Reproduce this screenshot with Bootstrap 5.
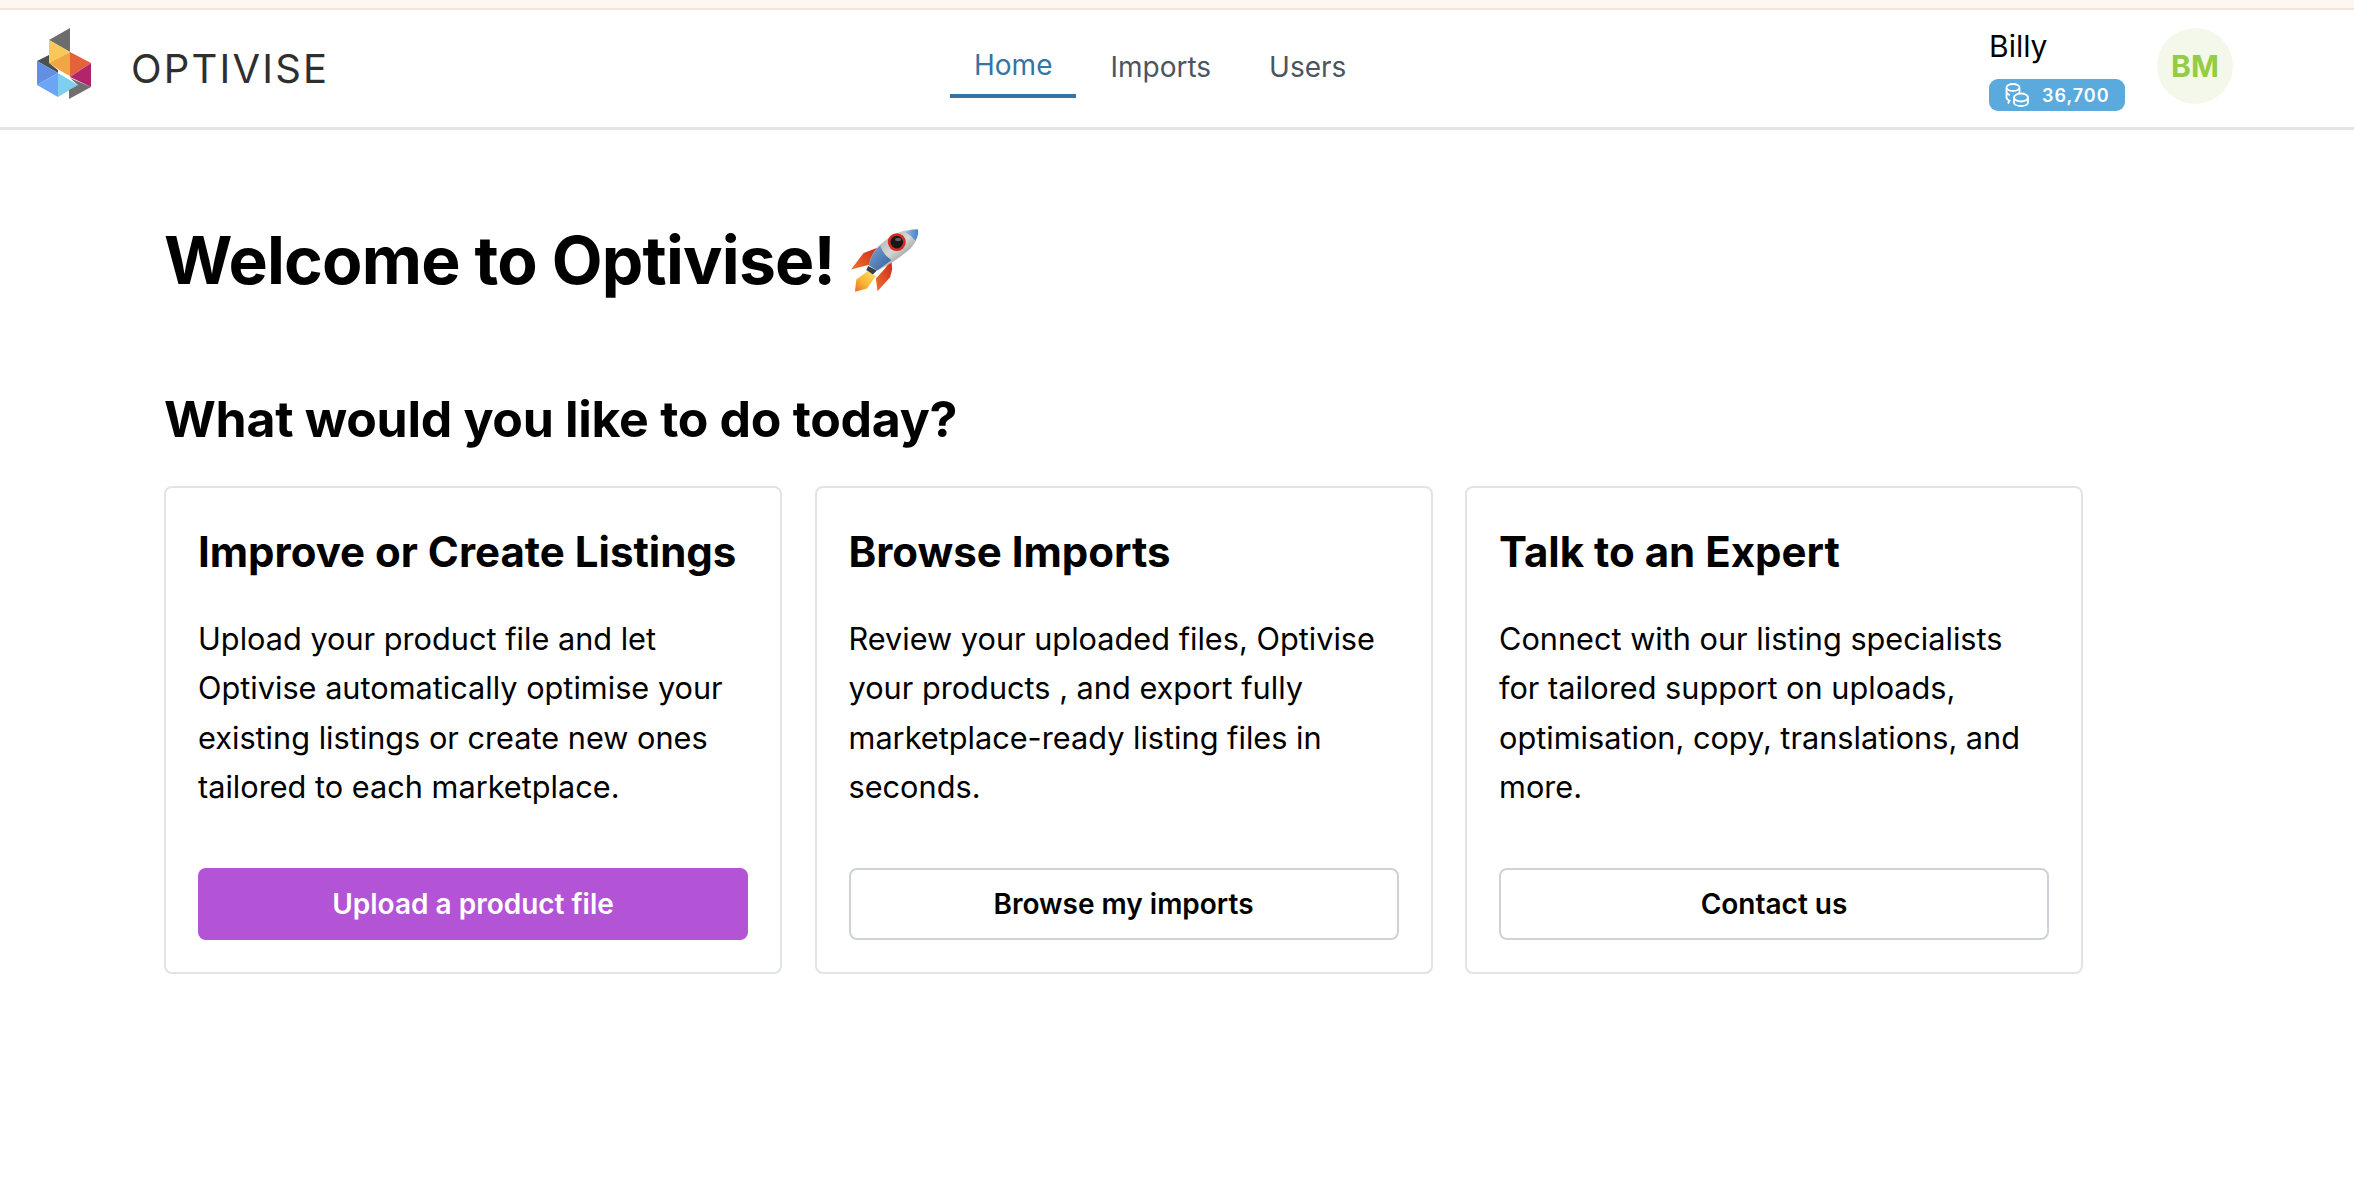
<!DOCTYPE html>
<html lang="en">
  <head>
    <meta charset="UTF-8" />
    <meta name="viewport" content="width=device-width, initial-scale=1.0" />
    <title>Optivise</title>
    <link href="https://cdn.jsdelivr.net/npm/bootstrap@5.3.3/dist/css/bootstrap.min.css" rel="stylesheet" />
    <style>
      body {
        font-family: Inter, "Liberation Sans", sans-serif;
        color: #000;
        background: #fff;
      }
      .top-strip {
        height: 10px;
        background: #fdf6f1;
        border-bottom: 2px solid #f6e4d9;
      }
      .app-bar {
        height: 120px;
        padding: 0 121px 0 37px;
        background: #fff;
        border-bottom: 3px solid #e1e5e9;
      }
      .logo-mark {
        margin-bottom: 9px;
      }
      .logo-word {
        font-size: 40px;
        font-weight: 400;
        letter-spacing: 2.2px;
        color: #2f2f2f;
        margin-left: 40px;
        line-height: 1;
      }
      .nav-holder {
        position: absolute;
        left: 950px;
        top: 28px;
      }
      .main-link {
        display: block;
        font-size: 28px;
        line-height: 1;
        color: #4b5560;
        text-decoration: none;
        padding: 15px 29px 0;
        height: 60px;
      }
      .main-link.current {
        color: #3574a4;
        border-bottom: 4px solid #3574a4;
        padding: 13px 24px 0;
        margin-right: 5px;
      }
      .user-block {
        margin-top: 5px;
        gap: 18px;
      }
      .user-name {
        font-size: 30px;
        line-height: 1;
        color: #000;
      }
      .credit-pill {
        background: #5aaade;
        color: #fff;
        border-radius: 9px;
        height: 32px;
        width: 136px;
        font-size: 18px;
        font-weight: 600;
        letter-spacing: 1px;
        gap: 13px;
        padding-left: 16px;
      }
      .avatar-dot {
        width: 76px;
        height: 76px;
        border-radius: 50%;
        background: #f3f8ea;
        color: #94cc45;
        font-size: 30px;
        font-weight: 700;
        margin-left: 32px;
        margin-bottom: 5px;
      }
      .page-body {
        padding-left: 164px;
      }
      .hello-title {
        font-size: 66px;
        font-weight: 700;
        line-height: 1;
        margin: 97px 0 0;
        letter-spacing: -0.8px;
      }
      .ask-title {
        font-size: 50px;
        font-weight: 700;
        line-height: 1;
        margin: 101px 0 0;
        letter-spacing: -0.3px;
      }
      .task-row {
        margin-top: 41.500px;
        gap: 32.5px;
      }
      .task-card {
        flex: 0 0 618px;
        height: 488px;
        border: 2px solid #e0e3e8;
        border-radius: 8px;
        padding: 32px;
      }
      .task-title {
        font-size: 42px;
        font-weight: 700;
        line-height: 64px;
        margin: 0;
      }
      .task-text {
        font-size: 30.7px;
        line-height: 49.6px;
        margin: 30px 0 0;
      }
      .task-btn {
        height: 72px;
        border-radius: 8px;
        font-size: 28px;
        font-weight: 600;
        padding: 0;
      }
      .btn-purple {
        background: #b354d7;
        color: #fff;
        border: 0;
      }
      .btn-plain {
        background: #fff;
        color: #000;
        border: 2px solid #cfd2d6;
      }
    </style>
  </head>
  <body>
    <div class="top-strip"></div>
    <nav class="app-bar d-flex align-items-center position-relative">
      <svg class="logo-mark" width="54" height="72" viewBox="0 0 54 72" aria-label="Optivise logo">
        <polygon points="12,12 33,0 33,24" fill="#6d6d6b" />
        <polygon points="12,12 33,24 12,35" fill="#f6c958" />
        <polygon points="33,24 12,35 33,49" fill="#f3a445" />
        <polygon points="33,24 54,35 33,49" fill="#e4623c" />
        <polygon points="54,35 54,59 33,49" fill="#b3246c" />
        <polygon points="0,33 12,27 12,35 21,42 21,45" fill="#4f4f4f" />
        <polygon points="0,33 21,45 0,57" fill="#628fe3" />
        <polygon points="21,45 0,57 21,69" fill="#6aa6f4" />
        <polygon points="21,45 21,69 41,57" fill="#7ecfec" />
        <polygon points="21,42 33,48 33,50 21,45" fill="#fff" />
        <polygon points="54,59 32,71 32,62 41,57 33,50" fill="#6f6f6f" />
      </svg>
      <span class="logo-word">OPTIVISE</span>
      <div class="nav-holder d-flex">
        <a class="main-link current" href="#">Home</a>
        <a class="main-link" href="#">Imports</a>
        <a class="main-link" href="#">Users</a>
      </div>
      <div class="ms-auto d-flex align-items-center">
        <div class="user-block d-flex flex-column">
          <span class="user-name">Billy</span>
          <span class="credit-pill d-flex align-items-center">
            <svg width="24" height="24" viewBox="0 0 24 24" fill="none" stroke="#fff" stroke-width="1.8">
              <ellipse cx="8" cy="4.5" rx="6.5" ry="3.5" />
              <path d="M1.500 4.500v4c0 2 1.500 3 3.500 3.500M1.500 9v5c0 2 1 3 3 3.500l-1.500 3M14.500 5v5" />
              <ellipse cx="16" cy="14.5" rx="7" ry="4" />
              <path d="M9 14.500v5c0 2 3 3.500 7 3.500s7-1.500 7-3.500v-5" />
            </svg>
            36,700
          </span>
        </div>
        <div class="avatar-dot d-flex align-items-center justify-content-center">BM</div>
      </div>
    </nav>

    <main class="page-body">
      <h1 class="hello-title d-flex align-items-center gap-3">
        Welcome to Optivise!
        <svg width="68" height="65" viewBox="30 80 205 195" aria-label="rocket">
          <defs>
            <linearGradient id="rocketBody" x1="0" y1="0" x2="1" y2="1">
              <stop offset="0" stop-color="#8e979c" />
              <stop offset="0.5" stop-color="#d6d8d6" />
              <stop offset="1" stop-color="#55585a" />
            </linearGradient>
            <linearGradient id="rocketTip" x1="0" y1="0" x2="1" y2="0">
              <stop offset="0" stop-color="#9fb8d6" />
              <stop offset="1" stop-color="#3f82cf" />
            </linearGradient>
            <linearGradient id="rocketBlue" x1="0" y1="0" x2="1" y2="1">
              <stop offset="0" stop-color="#7fa3cf" />
              <stop offset="1" stop-color="#2f5f9f" />
            </linearGradient>
            <linearGradient id="rocketFin" x1="1" y1="0" x2="0" y2="1">
              <stop offset="0" stop-color="#c9281c" />
              <stop offset="1" stop-color="#f0742e" />
            </linearGradient>
            <linearGradient id="rocketFlame" x1="1" y1="0" x2="0" y2="1">
              <stop offset="0" stop-color="#fbe36a" />
              <stop offset="0.6" stop-color="#f9b233" />
              <stop offset="1" stop-color="#e8662a" />
            </linearGradient>
          </defs>
          <path d="M80 210 L105 225 L78 262 L42 272 L46 235 Z" fill="url(#rocketFlame)" />
          <path d="M112 138 L68 155 L30 205 L85 190 Z" fill="url(#rocketFin)" />
          <path d="M152 176 L130 205 L105 232 L110 270 L148 228 L154 205 Z" fill="url(#rocketFin)" />
          <path d="M82 194 L108 208 L96 220 L76 206 Z" fill="#3a3f45" />
          <path d="M84 192 C88 160 112 128 150 106 C178 88 210 82 232 84 C234 112 218 138 192 156 C166 176 130 200 108 208 Z" fill="url(#rocketBody)" />
          <path d="M194 92 C208 84 222 83 232 84 C234 96 230 108 224 118 C216 108 206 98 194 92 Z" fill="url(#rocketTip)" />
          <path d="M84 192 C88 168 100 148 118 132 C124 150 136 166 152 176 C136 188 120 200 108 208 Z" fill="url(#rocketBlue)" />
          <circle cx="168" cy="122" r="27" fill="#d8291f" />
          <circle cx="168" cy="122" r="19" fill="#17171a" />
          <ellipse cx="172" cy="114" rx="9" ry="5" fill="#5c5f66" />
        </svg>
      </h1>
      <h2 class="ask-title">What would you like to do today?</h2>

      <div class="task-row d-flex">
        <div class="task-card d-flex flex-column">
          <h3 class="task-title">Improve or Create Listings</h3>
          <p class="task-text">Upload your product file and let Optivise automatically optimise your existing listings or create new ones tailored to each marketplace.</p>
          <a href="#" class="btn task-btn btn-purple mt-auto d-flex align-items-center justify-content-center">Upload a product file</a>
        </div>
        <div class="task-card d-flex flex-column">
          <h3 class="task-title">Browse Imports</h3>
          <p class="task-text">Review your uploaded files, Optivise your products , and export fully marketplace-ready listing files in seconds.</p>
          <a href="#" class="btn task-btn btn-plain mt-auto d-flex align-items-center justify-content-center">Browse my imports</a>
        </div>
        <div class="task-card d-flex flex-column">
          <h3 class="task-title">Talk to an Expert</h3>
          <p class="task-text">Connect with our listing specialists for tailored support on uploads, optimisation, copy, translations, and more.</p>
          <a href="#" class="btn task-btn btn-plain mt-auto d-flex align-items-center justify-content-center">Contact us</a>
        </div>
      </div>
    </main>
  </body>
</html>
